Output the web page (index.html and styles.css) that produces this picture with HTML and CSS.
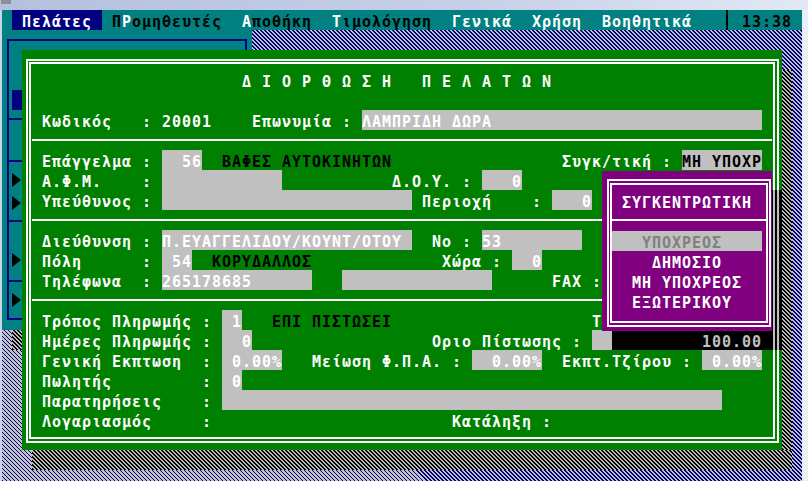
FILE: index.html
```html
<!DOCTYPE html>
<html lang="el">
<head>
<meta charset="utf-8">
<title>Πελάτες</title>
<link rel="stylesheet" href="styles.css">
</head>
<body>
<div class="titlebar"><span class="tb-icon"></span></div>
<div class="screen">
  <div class="menubar"> <span class="sel"> Πελάτες </span> Π<span class="hk">Ρ</span>ομηθευτές  <span class="hk">Α</span>ποθήκη  <span class="hk">Τ</span>ιμολόγηση  <span class="hk">Γενικά</span>  <span class="hk">Χρήση</span>  <span class="hk">Βοηθητικά</span>   <span class="vbar"></span> 13:38</div>

  <div class="win-left-shadow-r"></div>
  <div class="win-left-shadow-b"></div>
  <div class="win-left">
    <div class="wl-frame">
      <div class="wl-sec s1"><div class="wl-row"></div><div class="wl-row"></div><div class="wl-row"><div class="wl-bar"></div></div></div>
      <div class="wl-sec s2"></div>
      <div class="wl-sec s3"><div class="wl-row"><span class="tri"></span></div><div class="wl-row"><span class="tri"></span></div></div>
      <div class="wl-sec s4"><div class="wl-row"></div><div class="wl-row"><span class="tri"></span></div></div>
      <div class="wl-sec s5"><div class="wl-row"><span class="tri"></span></div></div>
    </div>
  </div>

  <div class="dlg-shadow-r"></div>
  <div class="dlg-shadow-b"></div>
  <div class="dialog">
    <div class="frame">
      <div class="ln">                     Δ Ι Ο Ρ Θ Ω Σ Η   Π Ε Λ Α Τ Ω Ν</div>
      <div class="ln"></div>
      <div class="ln"> Κωδικός   : 20001    Επωνυμία : <span class="f">ΛΑΜΠΡΙΔΗ ΔΩΡΑ                           </span></div>
      <div class="sep"></div>
      <div class="ln"> Επάγγελμα : <span class="f">  56</span>  <span class="k">ΒΑΦΕΣ ΑΥΤΟΚΙΝΗΤΩΝ</span>                 Συγκ/τική : <span class="f k">ΜΗ ΥΠΟΧΡ</span></div>
      <div class="ln"> Α.Φ.Μ.    : <span class="f">            </span>           Δ.Ο.Υ. : <span class="f">   0</span></div>
      <div class="ln"> Υπεύθυνος : <span class="f">                         </span> Περιοχή    : <span class="f">   0</span></div>
      <div class="sep"></div>
      <div class="ln"> Διεύθυνση : <span class="f">Π.ΕΥΑΓΓΕΛΙΔΟΥ/ΚΟΥΝΤ/ΟΤΟΥ </span>  Νο : <span class="f">53        </span></div>
      <div class="ln"> Πόλη      : <span class="f"> 54</span>  <span class="k">ΚΟΡΥΔΑΛΛΟΣ</span>             Χώρα : <span class="f">  0</span></div>
      <div class="ln"> Τηλέφωνα  : <span class="f">265178685      </span>   <span class="f">               </span>      FAX :</div>
      <div class="sep"></div>
      <div class="ln"> Τρόπος Πληρωμής : <span class="f"> 1</span>   <span class="k">ΕΠΙ ΠΙΣΤΩΣΕΙ</span>                    Τ</div>
      <div class="ln"> Ημέρες Πληρωμής : <span class="f">  0</span>                  Οριο Πίστωσης : <span class="f">  </span><span class="shd">         100.00 </span></div>
      <div class="ln"> Γενική Εκπτωση  : <span class="f"> 0.00%</span>   Μείωση Φ.Π.Α. : <span class="f">  0.00%</span>  Εκπτ.Τζίρου : <span class="f"> 0.00%</span></div>
      <div class="ln"> Πωλητής         : <span class="f"> 0</span></div>
      <div class="ln"> Παρατηρήσεις    : <span class="f">                                                  </span></div>
      <div class="ln"> Λογαριασμός     :                        Κατάληξη :</div>
    </div>
  </div>

  <div class="pop-shadow"></div>
  <div class="popup">
    <div class="pframe">
      <div class="ln"> ΣΥΓΚΕΝΤΡΩΤΙΚΗ </div>
      <div class="psep"></div>
      <div class="ln"><span class="hl">   ΥΠΟΧΡΕΟΣ    </span></div>
      <div class="ln">    ΔΗΜΟΣΙΟ</div>
      <div class="ln">  ΜΗ ΥΠΟΧΡΕΟΣ</div>
      <div class="ln">  ΕΞΩΤΕΡΙΚΟΥ</div>
    </div>
  </div>
</div>
</body>
</html>
```

FILE: styles.css
```css
* { box-sizing: border-box; }
html, body { margin: 0; padding: 0; }
body {
  width: 808px;
  height: 481px;
  overflow: hidden;
  background: linear-gradient(to right, #c9d6ea, #dfe8f4 40%, #e9eff8);
  font-family: "DejaVu Sans Mono", monospace;
  font-weight: bold;
  font-size: 15px;
  letter-spacing: 0.9692px;
}
.titlebar {
  height: 10px;
  background: linear-gradient(to right, #b4c0dc, #c6d0e8 60%, #e2e9f5);
}
.tb-icon {
  display: block;
  width: 10px;
  height: 4px;
  background: #8a8f98;
  margin-left: 1px;
}
.screen {
  position: relative;
  margin-left: 2px;
  width: 800px;
  height: 471px;
  overflow: hidden;
  background: repeating-linear-gradient(45deg, #000080 0 1.25px, #c0c0c0 1.25px 2.83px);
}
.menubar {
  height: 20px;
  line-height: 24px;
  white-space: pre;
  background: #008080;
  color: #000;
}
.menubar .sel {
  display: inline-block;
  height: 20px;
  vertical-align: top;
  background: #000080;
  color: #fff;
}
.hk { color: #fff; }
.vbar {
  display: inline-block;
  width: 10px;
  height: 20px;
  vertical-align: top;
  background: linear-gradient(to right, transparent 4px, #000 4px 6px, transparent 6px);
}

/* shadows */
.win-left-shadow-r, .win-left-shadow-b,
.dlg-shadow-r, .dlg-shadow-b {
  position: absolute;
  background: repeating-linear-gradient(45deg, #000 0 1.7px, #b8b8b8 1.7px 2.83px);
}
.win-left-shadow-r { left: 250px; top: 40px; width: 10px; height: 300px; }
.win-left-shadow-b { left: 10px; top: 320px; width: 250px; height: 20px; }
.dlg-shadow-r { left: 780px; top: 60px; width: 10px; height: 400px; }
.dlg-shadow-b { left: 30px; top: 440px; width: 760px; height: 20px; }

/* left window behind */
.win-left {
  position: absolute;
  left: 0;
  top: 20px;
  width: 250px;
  height: 300px;
  background: #008080;
}
.wl-frame {
  margin: 9px 5px 0 5px;
  height: 281px;
  border: 2px solid #000080;
}
.wl-sec { border-bottom: 2px solid #000080; }
.wl-sec.s1 { height: 79px; padding-top: 9px; }
.wl-sec.s2 { height: 42px; }
.wl-sec.s3 { height: 60px; padding-top: 8px; }
.wl-sec.s4 { height: 60px; padding-top: 8px; }
.wl-sec.s5 { height: 36px; padding-top: 8px; border-bottom: 0; }
.wl-row { height: 20px; }
.wl-bar { height: 20px; margin-left: 3px; width: 230px; background: #000080; }
.tri {
  display: block;
  width: 0;
  height: 0;
  margin: 3px 0 0 3px;
  border-left: 9px solid #000;
  border-top: 7px solid transparent;
  border-bottom: 7px solid transparent;
}

/* main dialog */
.dialog {
  position: absolute;
  left: 20px;
  top: 40px;
  width: 760px;
  height: 400px;
  background: #008000;
  color: #fff;
}
.frame {
  margin: 9px 3px 7px 4px;
  height: 384px;
  border-style: double;
  border-color: #fff;
  border-width: 5px 6px 6px 5px;
  padding: 6px 1px 0 1px;
}
.ln {
  height: 20px;
  line-height: 24px;
  white-space: pre;
}
.f, .shd, .hl {
  display: inline-block;
  height: 20px;
  vertical-align: top;
}
.f { background: #c0c0c0; color: #fff; }
.k { color: #000; }
.shd { background: #000; color: #c0c0c0; }
.sep {
  height: 20px;
  width: 740px;
  background: linear-gradient(to bottom, transparent 9px, #fff 9px 11px, transparent 11px);
}

/* popup list */
.pop-shadow {
  position: absolute;
  left: 770px;
  top: 180px;
  width: 10px;
  height: 160px;
  background: linear-gradient(to right, #000 1px, #c0c0c0 1px 3px, #000 3px 5px, #c0c0c0 5px 7px, #000 7px);
}
.popup {
  position: absolute;
  left: 600px;
  top: 161px;
  width: 170px;
  height: 160px;
  background: #800080;
  color: #fff;
}
.pframe {
  margin: 8px 1px 4px 5px;
  height: 148px;
  border-style: double;
  border-color: #fff;
  border-width: 6px 5px 6px 5px;
  padding-top: 6px;
}
.psep {
  height: 20px;
  background: linear-gradient(to bottom, transparent 8px, #fff 8px 10px, transparent 10px);
}
.hl { background: #c0c0c0; color: #808080; }
```
